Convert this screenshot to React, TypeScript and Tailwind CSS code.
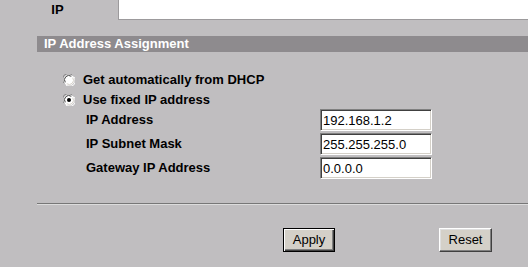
import React, { useState } from 'react';

const Radio: React.FC<{ checked: boolean; onClick: () => void }> = ({ checked, onClick }) => (
  <svg width="12" height="12" viewBox="0 0 12 12" onClick={onClick} className="shrink-0">
    <circle cx="6" cy="6" r="5.5" fill="#ffffff" />
    <path d="M1.2 9.2 A5.5 5.5 0 0 1 9.2 1.2" stroke="#808080" strokeWidth="1" fill="none" />
    <path d="M2.3 8.3 A4.3 4.3 0 0 1 8.3 2.3" stroke="#404040" strokeWidth="1" fill="none" />
    <path d="M10.8 2.8 A5.5 5.5 0 0 1 2.8 10.8" stroke="#ffffff" strokeWidth="1" fill="none" />
    <path d="M9.7 3.7 A4.3 4.3 0 0 1 3.7 9.7" stroke="#d4d0c8" strokeWidth="1" fill="none" />
    {checked && <circle cx="6" cy="6" r="2" fill="#000000" />}
  </svg>
);

const Field: React.FC<{ label: string; value: string; onChange: (v: string) => void }> = ({ label, value, onChange }) => (
  <div className="flex h-[22px] items-center">
    <div className="w-[234px] font-bold leading-[22px]">{label}</div>
    <input
      value={value}
      onChange={e => onChange(e.target.value)}
      className="h-[22px] w-[112px] border border-t-[#808080] border-l-[#808080] border-r-white border-b-white bg-white pl-[2px] text-[13px] leading-[20px] text-black shadow-[inset_1px_1px_0_#404040,inset_-1px_-1px_0_#d4d0c8] outline-none"
    />
  </div>
);

const App: React.FC = () => {
  const [mode, setMode] = useState<'dhcp' | 'fixed'>('fixed');
  const [ip, setIp] = useState('192.168.1.2');
  const [mask, setMask] = useState('255.255.255.0');
  const [gw, setGw] = useState('0.0.0.0');

  return (
    <div className="h-[267px] w-[528px] overflow-hidden bg-[#c0bec0] text-[13px] text-black" style={{ fontFamily: '"Liberation Sans", Arial, sans-serif' }}>
      {/* tabs */}
      <div className="flex h-[20px]">
        <div className="flex h-[20px] w-[119px] justify-center border-r border-[#9c9a9c] pr-[3px] font-bold leading-[19px]">
          IP
        </div>
        <div className="h-[20px] flex-1 border-b border-[#9c9a9c] bg-white" />
      </div>

      <div className="pl-[37px]">
        <div className="mt-[16px] h-[16px] bg-[#8e8b8e] pl-[7px] font-bold leading-[16px] text-white">
          IP Address Assignment
        </div>

        <div className="mt-[18px] pl-[26px]">
          <div className="flex h-[20px] items-center gap-[8px] font-bold">
            <Radio checked={mode === 'dhcp'} onClick={() => setMode('dhcp')} />
            <span>Get automatically from DHCP</span>
          </div>
          <div className="flex h-[20px] items-center gap-[8px] font-bold">
            <Radio checked={mode === 'fixed'} onClick={() => setMode('fixed')} />
            <span>Use fixed IP address</span>
          </div>
        </div>

        <div className="-mt-px flex flex-col gap-[2px] pl-[49px]">
          <Field label="IP Address" value={ip} onChange={setIp} />
          <Field label="IP Subnet Mask" value={mask} onChange={setMask} />
          <Field label="Gateway IP Address" value={gw} onChange={setGw} />
        </div>

        <div className="mt-[24px] h-[2px] border-t border-b border-t-[#777777] border-b-[#dcdcdc]" />

        <div className="mt-[23px] flex">
          <button
            type="button"
            className="ml-[246px] h-[24px] w-[52px] border border-black bg-[#d4d0c8] text-[13px] leading-[20px] shadow-[inset_1px_1px_0_#ffffff,inset_-1px_-1px_0_#404040,inset_-2px_-2px_0_#808080]"
          >
            Apply
          </button>
          <button
            type="button"
            className="ml-[104px] h-[24px] w-[53px] border border-t-white border-l-white border-r-[#404040] border-b-[#404040] bg-[#d4d0c8] text-[13px] leading-[20px] shadow-[inset_-1px_-1px_0_#808080,inset_1px_1px_0_#dfdfdf]"
          >
            Reset
          </button>
        </div>
      </div>
    </div>
  );
};

export default App;
